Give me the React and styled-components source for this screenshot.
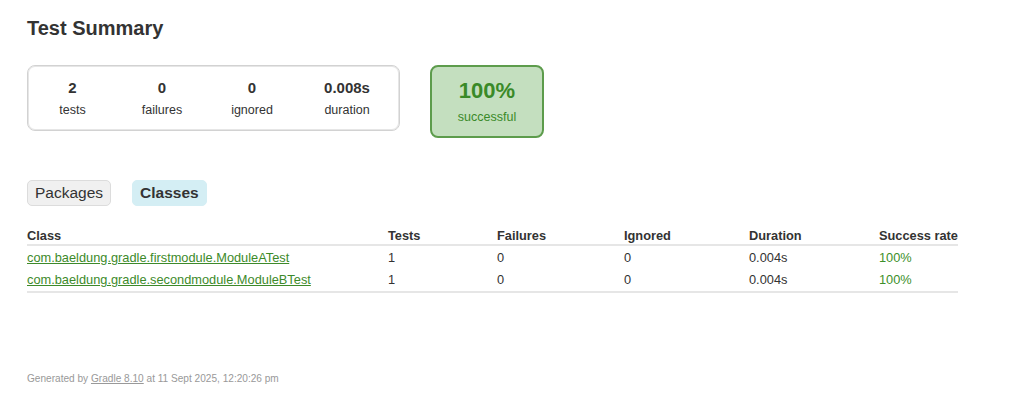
import React from "react";
import styled, { createGlobalStyle } from "styled-components";

const Global = createGlobalStyle`
  html, body { margin: 0; padding: 0; background: #fff; }
  body { font-family: "Liberation Sans", Arial, sans-serif; color: #333; }
`;

const Page = styled.div`
  padding: 14px 27px 0 27px;
  width: 931px;
`;

const Title = styled.h1`
  margin: 0;
  font-size: 20px;
  font-weight: bold;
  color: #333;
  line-height: 28px;
`;

const SummaryRow = styled.div`
  display: flex;
  align-items: flex-start;
  gap: 30px;
  margin-top: 23px;
`;

const CountersBox = styled.div`
  width: 371px;
  height: 64px;
  border: 1px solid #d2d2d2;
  box-shadow: inset 0 0 0 1px #e6e6e6;
  border-radius: 8px;
  display: grid;
  grid-template-columns: 89px 90px 90px 100px;
  align-items: center;
`;

const Counter = styled.div`
  text-align: center;
`;

const CounterValue = styled.div`
  font-size: 15px;
  font-weight: bold;
  color: #333;
  line-height: 18px;
`;

const CounterLabel = styled.div`
  font-size: 12.5px;
  color: #333;
  margin-top: 6px;
  line-height: 15px;
`;

const SuccessBox = styled.div`
  width: 110px;
  height: 69px;
  border: 2px solid #5d9c4c;
  border-radius: 8px;
  background: #c4dfbf;
  display: flex;
  flex-direction: column;
  align-items: center;
  justify-content: center;
  color: #3a8a28;
`;

const SuccessValue = styled.div`
  font-size: 22px;
  font-weight: bold;
  line-height: 26px;
  margin-top: -1px;
`;

const SuccessLabel = styled.div`
  font-size: 12.5px;
  margin-top: 6px;
  line-height: 15px;
`;

const Tabs = styled.div`
  display: flex;
  gap: 21px;
  margin-top: 42px;
`;

const Tab = styled.div`
  height: 26px;
  padding: 0 7px;
  border-radius: 5px;
  box-sizing: border-box;
  display: flex;
  align-items: center;
  font-size: 15.5px;
  border: 1px solid ${(p) => (p.$active ? "#d4eef4" : "#dcdcdc")};
  background: ${(p) => (p.$active ? "#d4eef4" : "#f0f0f0")};
  font-weight: ${(p) => (p.$active ? "bold" : "normal")};
  color: #333;
`;

const Table = styled.div`
  margin-top: 20px;
  width: 931px;
  border-bottom: 2px solid #e6e6e6;
`;

const Row = styled.div`
  display: grid;
  grid-template-columns: 361px 109px 127px 125px 130px 79px;
  align-items: center;
  height: ${(p) => (p.$head ? "18px" : "22.5px")};
  border-bottom: ${(p) => (p.$head ? "2px solid #e6e6e6" : "none")};
  font-size: 12.8px;
  font-weight: ${(p) => (p.$head ? "bold" : "normal")};
  color: #333;
`;

const Cell = styled.div`
  color: ${(p) => (p.$success ? "#3d8f2a" : "inherit")};
  white-space: nowrap;
`;

const ClassLink = styled.a`
  color: #3d8a2a;
  text-decoration: underline;
`;

const Footer = styled.div`
  margin-top: 80px;
  font-size: 10.1px;
  color: #999;
`;

const FooterLink = styled.a`
  color: #999;
  text-decoration: underline;
`;

const counters = [
  ["2", "tests"],
  ["0", "failures"],
  ["0", "ignored"],
  ["0.008s", "duration"],
];

const rows = [
  ["com.baeldung.gradle.firstmodule.ModuleATest", "1", "0", "0", "0.004s", "100%"],
  ["com.baeldung.gradle.secondmodule.ModuleBTest", "1", "0", "0", "0.004s", "100%"],
];

export default function App() {
  return (
    <>
      <Global />
      <Page>
        <Title>Test Summary</Title>
        <SummaryRow>
          <CountersBox>
            {counters.map(([v, l]) => (
              <Counter key={l}>
                <CounterValue>{v}</CounterValue>
                <CounterLabel>{l}</CounterLabel>
              </Counter>
            ))}
          </CountersBox>
          <SuccessBox>
            <SuccessValue>100%</SuccessValue>
            <SuccessLabel>successful</SuccessLabel>
          </SuccessBox>
        </SummaryRow>
        <Tabs>
          <Tab>Packages</Tab>
          <Tab $active>Classes</Tab>
        </Tabs>
        <Table>
          <Row $head>
            <Cell>Class</Cell>
            <Cell>Tests</Cell>
            <Cell>Failures</Cell>
            <Cell>Ignored</Cell>
            <Cell>Duration</Cell>
            <Cell>Success rate</Cell>
          </Row>
          {rows.map((r) => (
            <Row key={r[0]}>
              <Cell>
                <ClassLink href="#">{r[0]}</ClassLink>
              </Cell>
              <Cell>{r[1]}</Cell>
              <Cell>{r[2]}</Cell>
              <Cell>{r[3]}</Cell>
              <Cell>{r[4]}</Cell>
              <Cell $success>{r[5]}</Cell>
            </Row>
          ))}
        </Table>
        <Footer>
          Generated by <FooterLink href="#">Gradle 8.10</FooterLink> at 11 Sept 2025, 12:20:26 pm
        </Footer>
      </Page>
    </>
  );
}
